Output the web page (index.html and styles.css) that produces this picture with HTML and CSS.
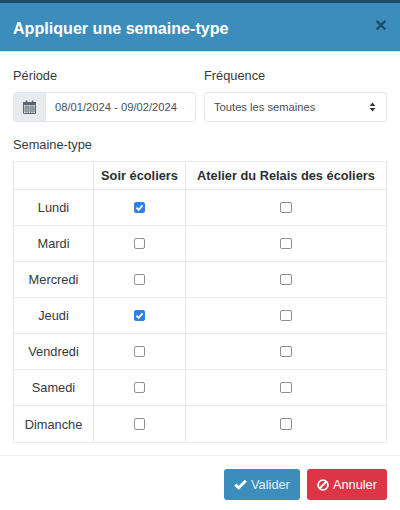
FILE: index.html
```html
<!DOCTYPE html>
<html lang="fr">
<head>
  <meta charset="UTF-8">
  <title>Appliquer une semaine-type</title>
  <link rel="stylesheet" href="styles.css">
</head>
<body>
  <div class="modal">
    <header class="modal-header">
      <h1>Appliquer une semaine-type</h1>
      <button class="close" aria-label="Fermer">&times;</button>
    </header>

    <main class="modal-body">
      <div class="form-row">
        <div class="field">
          <label>Période</label>
          <div class="input-group">
            <span class="addon">
              <svg width="13" height="14" viewBox="0 0 13 14" fill="none" stroke="#5b6570">
                <path d="M.5 2.5h12v11H.5z" stroke-width="1"/>
                <path d="M.5 2.5h12v2H.5z" fill="#5b6570"/>
                <path d="M.5 7h12M.5 9h12M.5 11h12M3 5v8M5.2 5v8M7.8 5v8M10 5v8" stroke-width=".8"/>
                <path d="M3.5 .5v3M9.5 .5v3" stroke-width="1.6"/>
              </svg>
            </span>
            <span class="date-value">08/01/2024 - 09/02/2024</span>
          </div>
        </div>
        <div class="field">
          <label>Fréquence</label>
          <div class="select">
            <span>Toutes les semaines</span>
            <svg width="7" height="10" viewBox="0 0 7 10" fill="#343a40">
              <path d="M3.5 0.5L6.5 4H.5zM3.5 9.5L.5 6h6z"/>
            </svg>
          </div>
        </div>
      </div>

      <label>Semaine-type</label>
      <table class="week">
        <thead>
          <tr>
            <th class="col-day"></th>
            <th class="col-a">Soir écoliers</th>
            <th>Atelier du Relais des écoliers</th>
          </tr>
        </thead>
        <tbody>
          <tr>
            <td>Lundi</td>
            <td><span class="check on"><svg width="9" height="9" viewBox="0 0 10 10"><path d="M1.6 5.2l2.4 2.4 4.4-5" fill="none" stroke="#fff" stroke-width="2"/></svg></span></td>
            <td><span class="check"></span></td>
          </tr>
          <tr>
            <td>Mardi</td>
            <td><span class="check"></span></td>
            <td><span class="check"></span></td>
          </tr>
          <tr>
            <td>Mercredi</td>
            <td><span class="check"></span></td>
            <td><span class="check"></span></td>
          </tr>
          <tr>
            <td>Jeudi</td>
            <td><span class="check on"><svg width="9" height="9" viewBox="0 0 10 10"><path d="M1.6 5.2l2.4 2.4 4.4-5" fill="none" stroke="#fff" stroke-width="2"/></svg></span></td>
            <td><span class="check"></span></td>
          </tr>
          <tr>
            <td>Vendredi</td>
            <td><span class="check"></span></td>
            <td><span class="check"></span></td>
          </tr>
          <tr>
            <td>Samedi</td>
            <td><span class="check"></span></td>
            <td><span class="check"></span></td>
          </tr>
          <tr>
            <td>Dimanche</td>
            <td><span class="check"></span></td>
            <td><span class="check"></span></td>
          </tr>
        </tbody>
      </table>
    </main>

    <footer class="modal-footer">
      <button class="btn btn-primary">
        <svg width="13" height="11" viewBox="0 0 13 11"><path d="M1.2 5.6l3.6 3.2 7-7" fill="none" stroke="#fff" stroke-width="2.8"/></svg>
        Valider
      </button>
      <button class="btn btn-danger">
        <svg width="12" height="12" viewBox="0 0 13 13" fill="none" stroke="#fff" stroke-width="2"><circle cx="6.5" cy="6.5" r="5.3"/><path d="M3 10l7-7"/></svg>
        Annuler
      </button>
    </footer>
  </div>
</body>
</html>
```

FILE: styles.css
```css
* {
  box-sizing: border-box;
}

body {
  margin: 0;
  background: #fff;
  color: #343a40;
  font-family: "Liberation Sans", Arial, sans-serif;
  font-size: 12.8px;
  height: 510px;
  overflow: hidden;
}

.modal {
  border-top: 3px solid #1d4a66;
}

.modal-header {
  display: flex;
  justify-content: space-between;
  align-items: flex-start;
  height: 49px;
  background: #3c8dbc;
  color: #fff;
  padding: 14px 13px 0;
  border-bottom: 1px solid #dee2e6;
}

.modal-header h1 {
  margin: 0;
  font-size: 16.1px;
  line-height: 22px;
  font-weight: bold;
}

.close {
  border: none;
  background: none;
  padding: 0;
  margin-top: -1px;
  margin-right: 0;
  color: #1e4d6b;
  font-family: inherit;
  font-size: 21px;
  font-weight: bold;
  line-height: 18px;
}

.modal-body {
  padding: 14px 13px 0;
}

.form-row {
  display: flex;
  gap: 8px;
  margin-bottom: 13px;
}

.field {
  flex: 1;
}

label {
  display: block;
  line-height: 20px;
  margin-bottom: 6px;
}

.input-group {
  display: flex;
  height: 30px;
  border: 1px solid #e3e6ea;
  border-radius: 3px;
  font-size: 11.2px;
  color: #495057;
}

.addon {
  display: flex;
  align-items: center;
  justify-content: center;
  width: 32px;
  background: #e9ecef;
  border-right: 1px solid #e3e6ea;
}

.date-value {
  line-height: 28px;
  padding-left: 9px;
}

.select {
  display: flex;
  justify-content: space-between;
  align-items: center;
  height: 30px;
  padding: 0 10px 0 9px;
  border: 1px solid #e3e6ea;
  border-radius: 3px;
  font-size: 11.2px;
  color: #495057;
}

.week {
  width: 374px;
  border-collapse: collapse;
  table-layout: fixed;
}

.week th,
.week td {
  border: 1px solid #e6e9ed;
  text-align: center;
  padding: 0;
}

.week th {
  height: 28px;
  font-weight: bold;
  color: #2b3035;
}

.week td {
  height: 36px;
}

.week tbody tr:last-child td {
  height: 37px;
}

.col-day {
  width: 80px;
}

.col-a {
  width: 92px;
}

.check {
  display: inline-flex;
  align-items: center;
  justify-content: center;
  width: 11.5px;
  height: 11.5px;
  margin-top: -2px;
  border: 1.6px solid #8a8f9c;
  border-radius: 2px;
  vertical-align: middle;
  background: #fff;
}

.check.on {
  background: #2f80ed;
  border-color: #2f80ed;
}

.modal-footer {
  display: flex;
  justify-content: flex-end;
  gap: 7px;
  margin-top: 12px;
  padding: 13px 13px 0;
  border-top: 1px solid #eef0f2;
}

.btn {
  display: flex;
  align-items: center;
  gap: 4px;
  height: 31px;
  padding: 0 10px;
  border: none;
  border-radius: 3px;
  font-family: inherit;
  font-size: 12.8px;
  color: #fff;
}

.btn-primary {
  background: #3c8dbc;
  color: #e3f0f7;
}

.btn-danger {
  background: #dc3545;
}
```
